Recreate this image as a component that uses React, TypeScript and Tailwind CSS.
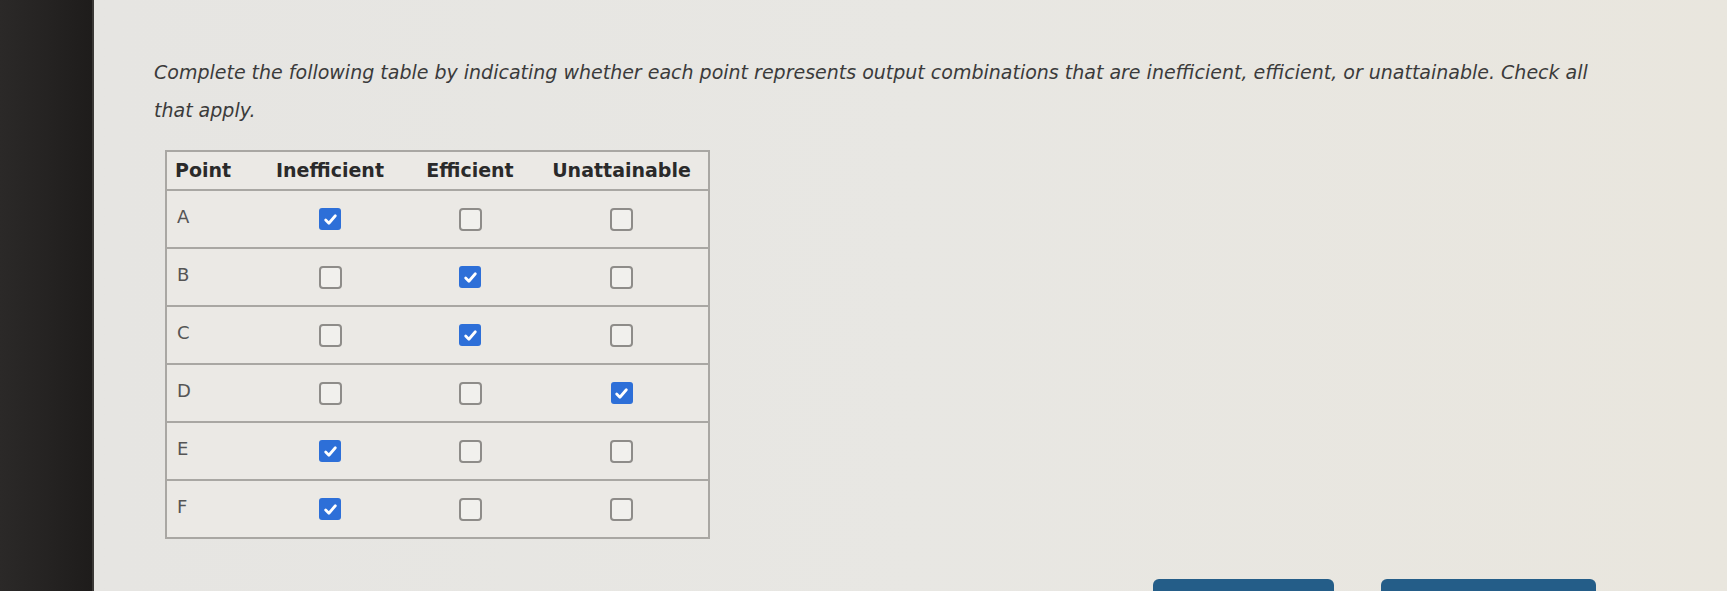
import React from 'react';

type Col = 'inefficient' | 'efficient' | 'unattainable';

const rows: { point: string; checked: Col[] }[] = [
  { point: 'A', checked: ['inefficient'] },
  { point: 'B', checked: ['efficient'] },
  { point: 'C', checked: ['efficient'] },
  { point: 'D', checked: ['unattainable'] },
  { point: 'E', checked: ['inefficient'] },
  { point: 'F', checked: ['inefficient'] },
];

const cols: Col[] = ['inefficient', 'efficient', 'unattainable'];

const Box = ({ on }: { on: boolean }) =>
  on ? (
    <span className="inline-flex w-[22px] h-[22px] rounded-[3px] bg-[#2d6fd8] items-center justify-center">
      <svg width="15" height="15" viewBox="0 0 14 14">
        <path d="M2.5 7.5 L5.5 10.5 L11.5 3.5" fill="none" stroke="white" strokeWidth="2.6" strokeLinecap="round" strokeLinejoin="round" />
      </svg>
    </span>
  ) : (
    <span className="inline-block w-[23px] h-[23px] rounded-[4px] border-2 border-[#8e8c89] bg-[#f1f0ed]" />
  );

export default function App() {
  return (
    <div className="flex h-[591px] w-[1727px] overflow-hidden font-['DejaVu_Sans',sans-serif]">
      <div className="w-[94px] shrink-0 bg-gradient-to-r from-[#2b2928] via-[#252322] to-[#1e1c1b] border-r-2 border-[#3a3836]" />

      <div className="flex-1 flex flex-col bg-gradient-to-r from-[#e6e5e2] via-[#e8e7e3] to-[#e9e6de] pl-[60px] pt-[53px]">
        <p className="w-[1465px] text-[19px] leading-[38px] italic text-[#3b3b3b]">
          Complete the following table by indicating whether each point represents output combinations that are inefficient, efficient, or unattainable. Check all that apply.
        </p>

        <table className="mt-[21px] ml-[11px] w-[545px] border-collapse border-2 border-[#a9a7a3] bg-[#ebe9e5]">
          <thead>
            <tr className="h-[39px] border-b-2 border-[#a9a7a3]">
              <th className="w-[89px] pl-[8px] text-left text-[19px] font-bold text-[#2a2a2a]">Point</th>
              <th className="w-[150px] text-center text-[19px] font-bold text-[#2a2a2a]">Inefficient</th>
              <th className="w-[130px] text-center text-[19px] font-bold text-[#2a2a2a]">Efficient</th>
              <th className="text-center text-[19px] font-bold text-[#2a2a2a]">Unattainable</th>
            </tr>
          </thead>
          <tbody>
            {rows.map((r) => (
              <tr key={r.point} className="h-[58px] border-b-2 border-[#a9a7a3]">
                <td className="pl-[10px] pb-[6px] text-[18px] text-[#555]">{r.point}</td>
                {cols.map((c) => (
                  <td key={c} className="text-center align-middle">
                    <div className="flex justify-center">
                      <Box on={r.checked.includes(c)} />
                    </div>
                  </td>
                ))}
              </tr>
            ))}
          </tbody>
        </table>

        <div className="mt-auto flex justify-end gap-[47px] pr-[131px]">
          <div className="w-[181px] h-[12px] rounded-t-[6px] bg-[#245d88]" />
          <div className="w-[215px] h-[12px] rounded-t-[6px] bg-[#245d88]" />
        </div>
      </div>
    </div>
  );
}
